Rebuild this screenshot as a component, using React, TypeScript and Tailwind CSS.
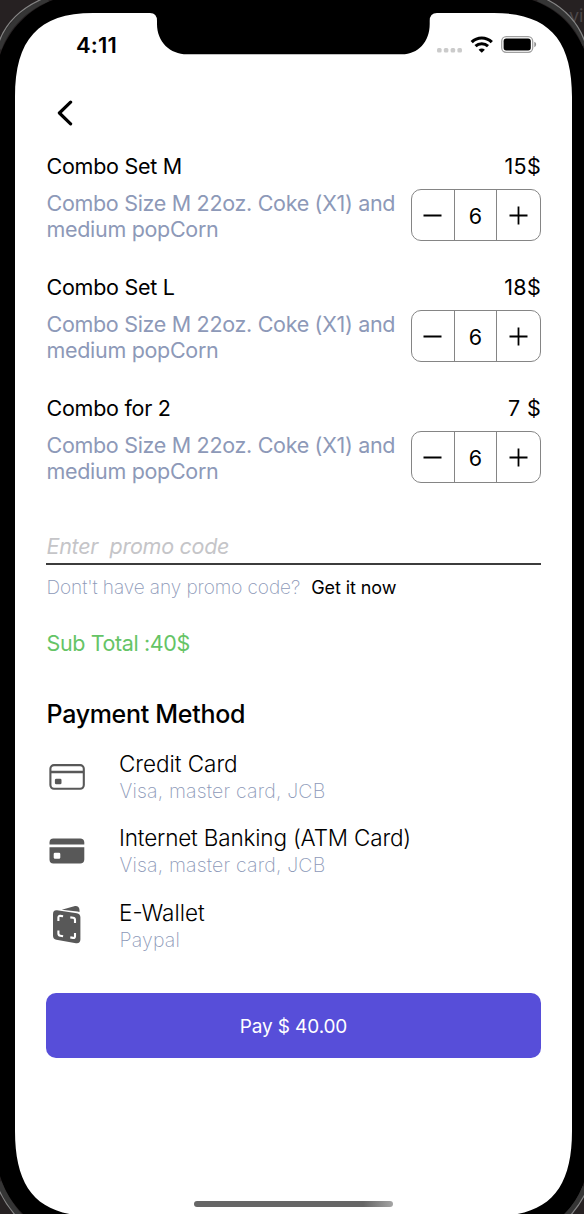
import React from 'react';

type Item = { name: string; price: string };

const items: Item[] = [
  { name: 'Combo Set M', price: '15$' },
  { name: 'Combo Set L', price: '18$' },
  { name: 'Combo for 2', price: '7 $' },
];

function StatusBar() {
  return (
    <div className="flex h-[89px] items-center justify-between pr-[47px] pl-[76px]">
      <span className="text-[22px] leading-none font-semibold tracking-[0.2px]">4:11</span>
      <div className="flex items-center">
        <svg width="26" height="17" viewBox="0 0 26 17" fill="#cbcbcb">
          <rect x="1" y="12" width="4.6" height="4.6" rx="1.5" />
          <rect x="7.8" y="12" width="4.6" height="4.6" rx="1.5" />
          <rect x="14.6" y="12" width="4.6" height="4.6" rx="1.5" />
          <rect x="21.4" y="12" width="4.6" height="4.6" rx="1.5" />
        </svg>
        <svg className="ml-2" width="23" height="17" viewBox="0 0 23 17" fill="none" stroke="#000">
          <path d="M1.7 6.2C7.4 0.6 16.1 0.6 21.8 6.2" strokeWidth="3.2" />
          <path d="M5.5 10.2C8.9 7 14.6 7 18 10.2" strokeWidth="3" />
          <path d="M11.75 16.8L8.6 13.8C10.4 12 13.1 12 14.9 13.8Z" fill="#000" stroke="none" />
        </svg>
        <svg className="ml-[8px]" width="36" height="17" viewBox="0 0 36 17">
          <rect x="0.7" y="0.7" width="31" height="15.6" rx="4.5" fill="none" stroke="#a0a0a0" strokeWidth="1.3" />
          <rect x="2.6" y="2.6" width="27.2" height="11.8" rx="2.6" fill="#000" />
          <path d="M33.3 5.8C35.7 6.6 35.7 10.4 33.3 11.2Z" fill="#8f8f8f" />
        </svg>
      </div>
    </div>
  );
}

function Stepper() {
  return (
    <div className="flex h-[52px] w-[130px] shrink-0 overflow-hidden rounded-[10px] border border-[#858585] bg-white">
      <button className="flex w-[43px] items-center justify-center border-r border-[#858585]">
        <svg width="20" height="20" viewBox="0 0 20 20" stroke="#000" strokeWidth="1.8">
          <path d="M0.5 10.5H18.5" />
        </svg>
      </button>
      <span className="flex w-[42px] items-center justify-center border-r border-[#858585] pt-[2px] text-[21.5px] font-[370]">6</span>
      <button className="flex flex-1 items-center justify-center">
        <svg width="20" height="20" viewBox="0 0 20 20" stroke="#000" strokeWidth="1.8">
          <path d="M0.5 10.5H18.5M9.5 1.5V19.5" />
        </svg>
      </button>
    </div>
  );
}

function ComboItem({ name, price }: Item) {
  return (
    <div className="h-[121px]">
      <div className="flex justify-between text-[21.5px] leading-[26px] font-[370]">
        <span className="pl-[0.5px] tracking-[-0.26px]">{name}</span>
        <span className="tracking-[0.3px]">{price}</span>
      </div>
      <div className="mt-[10px] flex items-start justify-between">
        <p className="pt-px pl-[0.5px] text-[21.5px] leading-[26px] font-[380] tracking-[-0.31px] whitespace-nowrap text-[#8d99b8]">
          Combo Size M 22oz. Coke (X1) and
          <br />
          medium popCorn
        </p>
        <Stepper />
      </div>
    </div>
  );
}

function CardOutlineIcon() {
  return (
    <svg width="36" height="26" viewBox="0 0 36 26" fill="none" stroke="#585858" strokeWidth="2.1">
      <rect x="1.4" y="1.1" width="33.4" height="23.6" rx="3.6" />
      <path d="M1.4 8H34.8" strokeWidth="2.7" />
      <rect x="5.9" y="14.7" width="6.6" height="5.6" rx="1.4" fill="#585858" stroke="none" />
    </svg>
  );
}

function CardSolidIcon() {
  return (
    <svg width="36" height="26" viewBox="0 0 36 26" fill="#585858">
      <path d="M0.5 6.5V4.4C0.5 1.9 1.9 0.4 4.4 0.4H31.2C33.7 0.4 35.3 1.9 35.3 4.4V6.5Z" />
      <path
        fillRule="evenodd"
        d="M0.5 9.3H35.3V21.4C35.3 23.9 33.7 25.5 31.2 25.5H4.4C1.9 25.5 0.5 23.9 0.5 21.4ZM6 14.8Q4.7 14.8 4.7 16.1V19.4Q4.7 20.7 6 20.7H10Q11.3 20.7 11.3 19.4V16.1Q11.3 14.8 10 14.8Z"
      />
    </svg>
  );
}

function WalletIcon() {
  return (
    <svg width="36" height="40" viewBox="0 0 36 40">
      <path d="M12.7 4.7L25.2 1.2C28.4 0.5 30.4 2.2 30.5 5V7.1C29.9 6.8 29.2 6.6 28.4 6.5Z" fill="#585858" />
      <path
        d="M4 9.2C4 6.4 5.3 4.8 8.1 5.2L27.8 8.2C30 8.5 31.4 10 31.4 12.2V34.5C31.4 37.2 29.6 38.7 27 38.2L7.4 34.8C5.2 34.4 4 33 4 30.8Z"
        fill="#585858"
      />
      <path
        d="M9.4 16V12.6Q9.4 10.7 11.3 10.9L14.1 11.3M21.3 12.4L24.1 12.8Q26 13.1 26 15V18M9.4 25.5V28.5Q9.4 30.5 11.3 30.8L14.1 31.3M21.3 32.4L24.1 32.9Q26 33.2 26 31.3V28"
        fill="none"
        stroke="#fff"
        strokeWidth="2.1"
      />
    </svg>
  );
}

function PaymentMethod({ icon, title, titleClass, note }: { icon: React.ReactNode; title: string; titleClass: string; note: string }) {
  return (
    <div className="flex h-[74.3px]">
      <div className="ml-[3px] flex h-[53px] w-[70px] items-center">{icon}</div>
      <div className="whitespace-nowrap">
        <div className={`text-[22.5px] leading-[28px] font-light ${titleClass}`}>{title}</div>
        <div className="pl-[0.5px] text-[19.5px] leading-[26px] font-extralight tracking-[0.18px] text-[#8d99b8]">{note}</div>
      </div>
    </div>
  );
}

function DeviceFrame() {
  return (
    <svg className="pointer-events-none absolute inset-0" width="584" height="1214" viewBox="0 0 584 1214">
      <path
        fillRule="evenodd"
        d="M0 0H584V1214H0Z
        M15 97C15 40 38 13 93 13H150Q157 13 157 21V24C157 42 170 54.3 187 54.3H402C418 54.3 429.7 42 429.7 24V21Q429.7 13 437 13H494C549 13 572 40 572 97V1131C572 1189 549 1216 494 1216H93C38 1216 15 1189 15 1131Z"
        fill="#000"
      />
      <g fill="#262122">
        <path d="M0 0H53C29 9 9 29 0 55Z" />
        <path d="M532 0H584V49C574 26 558 9 532 0Z" />
        <path d="M0 1176C5 1192 13 1204 23 1214H0Z" />
        <path d="M584 1182C580 1194 573 1206 564 1214H584Z" />
      </g>
      <text x="569" y="22" fontFamily="Inter, sans-serif" fontSize="18" fill="#4b4648">
        vi
      </text>
      <g fill="none" stroke="#353535" strokeWidth="5">
        <path d="M48 -1C26 8 7 26 -1 49" />
        <path d="M538 -1C560 8 577 24 585 45" />
        <path d="M-1 1182C4 1195 11 1206 20 1216" />
        <path d="M585 1187C581 1197 575 1207 566 1216" />
      </g>
      <g fill="none" stroke="#858585" strokeWidth="1.2">
        <path d="M42 -1C22 8 6 22 -1 42" />
        <path d="M546 -1C564 8 578 22 585 42" />
        <path d="M-1 1190C3 1199 9 1208 16 1216" />
        <path d="M585 1194C581 1202 576 1209 570 1216" />
      </g>
    </svg>
  );
}

export default function App() {
  return (
    <div className="relative h-[1214px] w-[584px] overflow-hidden bg-white font-['Inter',sans-serif] text-black">
      <StatusBar />
      <main className="ml-[46px] w-[495px]">
        <button className="flex h-12 items-center pl-[10px]" aria-label="Back">
          <svg width="18" height="26" viewBox="0 0 18 26" fill="none" stroke="#000" strokeWidth="3.2" strokeLinecap="round" strokeLinejoin="round">
            <path d="M14.6 2.2L3.4 13L14.6 23.8" />
          </svg>
        </button>

        <section className="mt-4">
          {items.map((item) => (
            <ComboItem key={item.name} {...item} />
          ))}
        </section>

        <section className="mt-[15px]">
          <div className="h-[34px] border-b-2 border-[#3c3c3c] pl-[0.5px] text-[21.5px] leading-[30px] font-[380] tracking-[-0.28px] whitespace-pre text-[#c5c5c8] italic">
            Enter  promo code
          </div>
          <p className="flex gap-[11px] pt-[10px] pl-[0.5px] leading-[26px] whitespace-nowrap">
            <span className="text-[19px] font-extralight tracking-[-0.07px] text-[#8d99b8]">Dont't have any promo code?</span>
            <span className="text-[18px] tracking-[-0.08px]">Get it now</span>
          </p>
          <p className="mt-[28px] pl-[0.5px] text-[21.5px] leading-[28px] font-[380] tracking-[-0.38px] text-[#65c466]">Sub Total :40$</p>
        </section>

        <section className="mt-[41px]">
          <h2 className="pl-[0.5px] text-[25px] leading-[32px] font-medium tracking-[-0.3px]">Payment Method</h2>
          <div className="mt-[20px]">
            <PaymentMethod icon={<CardOutlineIcon />} title="Credit Card" titleClass="tracking-[-0.03px]" note="Visa, master card, JCB" />
            <PaymentMethod icon={<CardSolidIcon />} title="Internet Banking (ATM Card)" titleClass="tracking-[-0.17px]" note="Visa, master card, JCB" />
            <PaymentMethod icon={<WalletIcon />} title="E-Wallet" titleClass="tracking-normal" note="Paypal" />
          </div>
        </section>

        <button className="mt-[20px] flex h-[65px] w-full items-center justify-center rounded-[10px] bg-[#574ed9] pt-[3px] text-[19px] font-[370] tracking-[-0.12px] text-white">
          Pay $ 40.00
        </button>
      </main>
      <DeviceFrame />
      <div className="absolute top-[1201px] left-[194px] h-[6px] w-[199px] rounded-full bg-linear-to-r from-[#666] from-85% to-[#a5a5a5]" />
    </div>
  );
}
